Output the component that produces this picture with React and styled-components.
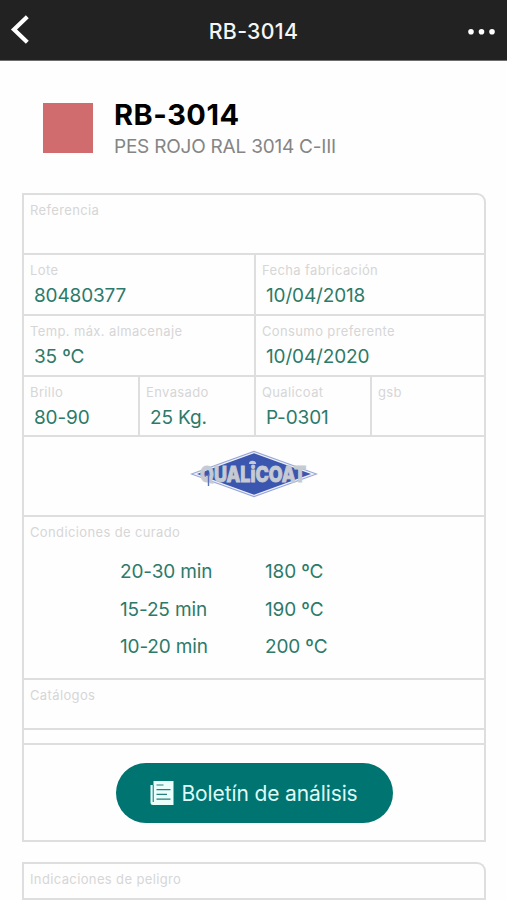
import React from "react";
import styled, { createGlobalStyle } from "styled-components";

const GlobalStyle = createGlobalStyle`
* {
  box-sizing: border-box;
}
body {
  margin: 0;
  background-color: #fefefe;
  font-family: "Inter", "Liberation Sans", sans-serif;
}
`

const Screen = styled.div`
width: 507px;
height: 900px;
overflow: hidden;
`

const NavBar = styled.header`
height: 61px;
display: grid;
grid-template-columns: 60px 1fr 60px;
align-items: center;
background-color: #222222;
border-bottom: 1px solid #6e6e6e;
color: #f5f5f5;

h1 {
  margin: 1px 0 0;
  text-align: center;
  font-size: 21.3px;
  line-height: 26px;
  font-weight: 500;
  letter-spacing: 0.3px;
}
`

const NavButton = styled.button`
height: 60px;
padding: 0;
border: 0;
background: none;
display: flex;
justify-content: ${(props) => (props.$right ? "flex-end" : "flex-start")};

svg {
  display: block;
}
`

const Product = styled.section`
height: 132px;
padding: 42px 0 0 43px;
display: flex;
gap: 21px;
`

const Swatch = styled.div`
width: 50px;
height: 50px;
background-color: #d06c6e;
`

const ProductText = styled.div`
h2 {
  margin: -5px 0 0;
  font-size: 29px;
  line-height: 34px;
  font-weight: 700;
  letter-spacing: 0.5px;
  color: #000;
}
p {
  margin: 3px 0 0;
  font-size: 19px;
  line-height: 24px;
  letter-spacing: -0.22px;
  color: #858585;
}
`

const Card = styled.section`
width: 464px;
margin: 0 0 20px 22px;
border: 2px solid #dedede;
border-bottom: 0;
border-top-right-radius: 9px;
`

const Row = styled.div`
height: ${(props) => props.$height}px;
display: grid;
grid-template-columns: ${(props) => props.$columns || "1fr"};
border-bottom: 2px solid #dedede;
`

const Cell = styled.div`
padding: 6px 0 0 6px;

& + & {
  border-left: 2px solid #dedede;
}
`

const Label = styled.div`
font-size: 13px;
line-height: 18px;
letter-spacing: 0.37px;
color: #d6d6d6;
white-space: nowrap;
`

const Value = styled.div`
margin: 5px 0 0 4px;
font-size: 19px;
line-height: 24px;
letter-spacing: -0.15px;
color: #2c7a69;
white-space: nowrap;
`

const LogoBox = styled.div`
display: flex;
justify-content: center;
padding-top: 13px;
`

const Curing = styled.div`
display: grid;
grid-template-columns: 145px 1fr;
grid-auto-rows: 37.7px;
padding: 12px 0 0 90px;
font-size: 19px;
line-height: 38px;
letter-spacing: -0.15px;
color: #2c7a69;
`

const ButtonBox = styled.div`
display: flex;
justify-content: center;
padding-top: 18px;
`

const ReportButton = styled.button`
width: 277px;
height: 60px;
padding: 0 0 0 34px;
border: 0;
border-radius: 30px;
display: flex;
align-items: center;
gap: 8px;
background-color: #007470;
color: #dcfaf7;
font-family: inherit;
font-size: 21px;
letter-spacing: -0.12px;

svg {
  flex: none;
}
`

const Field = ({ label, value }) => (
  <Cell>
    <Label>{label}</Label>
    {value && <Value>{value}</Value>}
  </Cell>
);

const BackIcon = () => (
  <svg width="40" height="60" viewBox="0 0 40 60" fill="none" stroke="#fff" strokeWidth="4.2">
    <path d="M27.3 16.8 L14 29.5 L27.3 42.2" />
  </svg>
);

const DotsIcon = () => (
  <svg width="50" height="60" viewBox="0 0 50 60" fill="#fff">
    <circle cx="14" cy="31.7" r="2.8" />
    <circle cx="24.5" cy="31.7" r="2.8" />
    <circle cx="35" cy="31.7" r="2.8" />
  </svg>
);

const QualicoatLogo = () => (
  <svg width="130" height="48" viewBox="0 0 130 48">
    <path d="M1 24 L65 0.8 L129 24 L65 47.2 Z" fill="#97a6d6" />
    <path d="M4 24 L65 2 L126 24 L65 46 Z" fill="#eef1fa" />
    <path d="M8 24 L65 3.2 L122 24 L65 44.8 Z" fill="#3b56ae" />
    <text
      x="11"
      y="31.5"
      textLength="106"
      lengthAdjust="spacingAndGlyphs"
      fontFamily="Inter, sans-serif"
      fontSize="21"
      fontWeight="800"
      fill="#c5cad3"
      stroke="#c5cad3"
      strokeWidth="1"
    >
      QUALiCOAT
    </text>
    <path d="M60 14 a3.6 3.2 0 0 1 7.2 0 Z" fill="#c5cad3" />
    <path d="M19.5 24 V36" stroke="#5a70b9" strokeWidth="1.4" />
  </svg>
);

const ReportIcon = () => (
  <svg width="24" height="26" viewBox="0 0 24 26">
    <path d="M3.5 1 H23.5 V25 H3 Q0.5 25 0.5 22.5 V5 H3.5 Z" fill="#eafffc" />
    <path d="M3.2 5 V22" stroke="#007470" strokeWidth="1" />
    <path d="M6.5 5 H13.5 M6.5 9.7 H20.5 M6.5 14.4 H17 M6.5 19.2 H20.5" stroke="#267f79" strokeWidth="1.2" />
  </svg>
);

const curing = [
  ["20-30 min", "180 ºC"],
  ["15-25 min", "190 ºC"],
  ["10-20 min", "200 ºC"],
];

const App = () => {
  return (
    <Screen>
      <GlobalStyle />
      <NavBar>
        <NavButton aria-label="Volver"><BackIcon /></NavButton>
        <h1>RB-3014</h1>
        <NavButton $right aria-label="Opciones"><DotsIcon /></NavButton>
      </NavBar>

      <Product>
        <Swatch />
        <ProductText>
          <h2>RB-3014</h2>
          <p>PES ROJO RAL 3014 C-III</p>
        </ProductText>
      </Product>

      <Card>
        <Row $height={60}>
          <Field label="Referencia" />
        </Row>
        <Row $height={61} $columns="230px 1fr">
          <Field label="Lote" value="80480377" />
          <Field label="Fecha fabricación" value="10/04/2018" />
        </Row>
        <Row $height={61} $columns="230px 1fr">
          <Field label="Temp. máx. almacenaje" value="35 ºC" />
          <Field label="Consumo preferente" value="10/04/2020" />
        </Row>
        <Row $height={60} $columns="114px 116px 116px 1fr">
          <Field label="Brillo" value="80-90" />
          <Field label="Envasado" value="25 Kg." />
          <Field label="Qualicoat" value="P-0301" />
          <Field label="gsb" />
        </Row>
        <Row $height={80}>
          <LogoBox><QualicoatLogo /></LogoBox>
        </Row>
        <Row $height={163}>
          <Cell>
            <Label>Condiciones de curado</Label>
            <Curing>
              {curing.map(([time, temp]) => (
                <React.Fragment key={time}>
                  <span>{time}</span>
                  <span>{temp}</span>
                </React.Fragment>
              ))}
            </Curing>
          </Cell>
        </Row>
        <Row $height={50}>
          <Field label="Catálogos" />
        </Row>
        <Row $height={15} />
        <Row $height={97}>
          <ButtonBox>
            <ReportButton>
              <ReportIcon />
              Boletín de análisis
            </ReportButton>
          </ButtonBox>
        </Row>
      </Card>

      <Card>
        <Row $height={36}>
          <Field label="Indicaciones de peligro" />
        </Row>
      </Card>
    </Screen>
  );
};

export default App;
